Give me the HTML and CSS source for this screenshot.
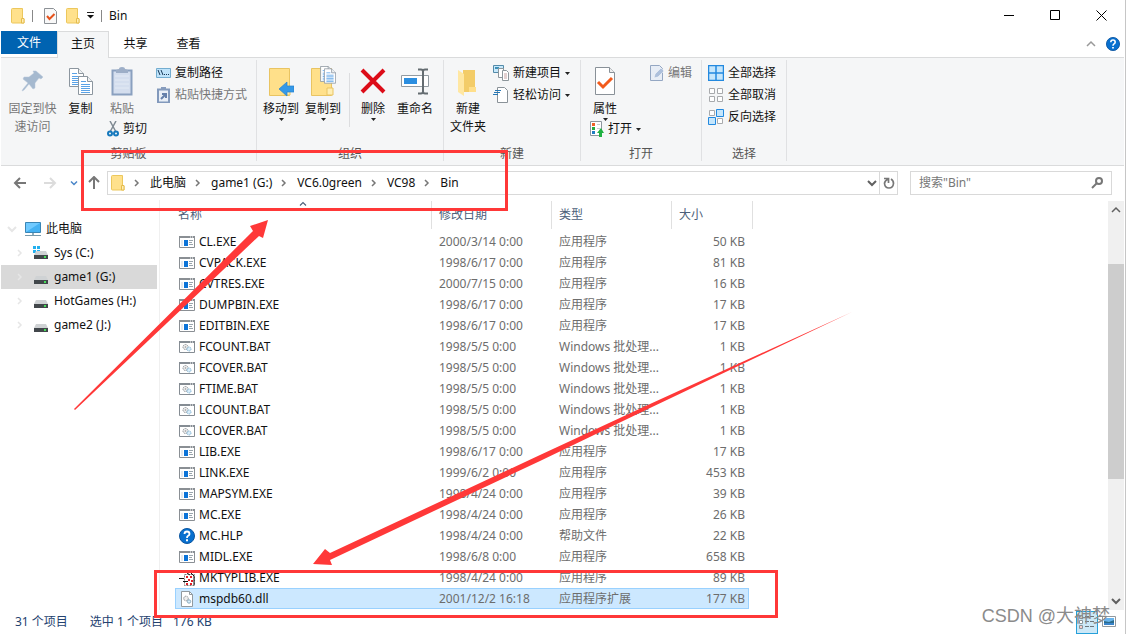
FILE: index.html
```html
<!DOCTYPE html>
<html lang="zh-CN">
<head>
<meta charset="utf-8">
<title>Bin</title>
<link rel="stylesheet" href="styles.css">
</head>
<body>
<svg class="defs" aria-hidden="true">
  <symbol id="folder" viewBox="0 0 14 16"><path d="M.5 1.500q0-1 1-1h10v10.500h1.500v4H1.500q-1 0-1-1z" fill="#ffe18c" stroke="#ecc75c"/><path d="M10.500 15v-4.500h2.500V15z" fill="#ffeeb5" stroke="#e5bc4c"/></symbol>
  <symbol id="chev-r" viewBox="0 0 6 8"><path d="M1 1l3 3-3 3" fill="none" stroke="currentColor" stroke-width="1.500"/></symbol>
  <symbol id="chev-d" viewBox="0 0 10 8"><path d="M1 2l4 4 4-4" fill="none" stroke="currentColor" stroke-width="2"/></symbol>
  <symbol id="chev-u" viewBox="0 0 10 8"><path d="M1 6l4-4 4 4" fill="none" stroke="currentColor" stroke-width="1.500"/></symbol>
  <symbol id="caret" viewBox="0 0 5 3"><path d="M0 0h5L2.500 3z" fill="currentColor"/></symbol>
  <symbol id="exe" viewBox="0 0 16 14"><path d="M.5 1.500h15v11H.5z" fill="#fff" stroke="#8a8f94"/><path d="M0 1h16v2H0z" fill="#8a8f94"/><path d="M11 2h1M13 2h1" stroke="#fff"/><path d="M2 5h2v6H2z" fill="#e4e9ee"/><path d="M5 5h4v6H5z" fill="#0a73d8"/><path d="M10 5.500h4M10 7.500h3M10 9.500h4" stroke="#9aa5ad"/></symbol>
  <symbol id="bat" viewBox="0 0 16 14"><path d="M.5 1.500h15v11H.5z" fill="#fff" stroke="#858c93"/><path d="M0 1h16v2H0z" fill="#858c93"/><path d="M11 2h1M13 2h1" stroke="#fff"/><circle cx="6.500" cy="7" r="2.500" fill="#eee" stroke="#8e9499" stroke-dasharray="1.500 .7"/><circle cx="6.500" cy="7" r=".8" fill="#999"/><circle cx="10" cy="9" r="2" fill="#d8edfa" stroke="#7fb2d2" stroke-dasharray="1.300 .6"/></symbol>
  <symbol id="drive" viewBox="0 0 14 8"><path d="M2 0h10l2 4H0z" fill="#cfd2d4"/><path d="M0 4h14v4H0z" fill="#42474b"/><path d="M10 5h2v2h-2z" fill="#45df57"/></symbol>
  <symbol id="help" viewBox="0 0 16 16"><circle cx="8" cy="8" r="7.500" fill="#0870cf" stroke="#0b55a0"/><path d="M5.500 6Q5.500 3.500 8 3.500T10.500 6Q10.500 7 9.200 7.800T8 10" fill="none" stroke="#fff" stroke-width="1.800"/><path d="M7 11.300h2v1.900H7z" fill="#fff"/></symbol>
  <symbol id="page" viewBox="0 0 15 19"><path d="M.5.5h9l5 5v13H.5z" fill="#fff" stroke="#8c969f"/><path d="M9.500.5v5h5" fill="#eef1f3" stroke="#8c969f"/><path d="M3 5.500h5M3 8.500h9M3 10.500h9M3 12.500h9M3 14.500h9M3 16.500h9" stroke="#5aa2e6"/></symbol>
</svg>

<div class="window">
  <header class="titlebar">
    <svg class="folder" aria-hidden="true"><use href="#folder"/></svg>
    <i class="bar"></i>
    <button class="quick check" aria-label="属性"><svg width="13" height="16"><path d="M.5.5h9l3 3v12H.5z" fill="#f8f8f8" stroke="#8c9196"/><path d="M3 8l2.500 3L10.500 6" fill="none" stroke="#e5511b" stroke-width="2"/></svg></button>
    <button class="quick" aria-label="新建文件夹"><svg class="folder"><use href="#folder"/></svg></button>
    <button class="quick more" aria-label="自定义快速访问工具栏"><svg width="7" height="7"><path d="M0 .5h7" stroke="#222"/><path d="M0 3h7L3.500 6.500z" fill="#111"/></svg></button>
    <i class="bar"></i>
    <h1>Bin</h1>
    <div class="controls">
      <button aria-label="最小化"><svg width="11" height="11"><path d="M0 5.500h10" stroke="#000"/></svg></button>
      <button aria-label="最大化"><svg width="11" height="11"><path d="M.5.5h9v9h-9z" fill="none" stroke="#000"/></svg></button>
      <button aria-label="关闭"><svg width="11" height="11"><path d="M.5.5l10 10m0-10l-10 10" stroke="#000"/></svg></button>
    </div>
  </header>

  <nav class="tabs">
    <button class="file">文件</button>
    <button class="active">主页</button>
    <button>共享</button>
    <button>查看</button>
    <div class="tab-tools">
      <button aria-label="最小化功能区"><svg class="chev gray"><use href="#chev-u"/></svg></button>
      <button aria-label="帮助"><svg width="14" height="14"><use href="#help"/></svg></button>
    </div>
  </nav>

  <section class="ribbon">
    <div class="group clipboard">
      <div class="tools">
        <button class="big pin dim"><svg width="32" height="36"><path d="M19 7l7 6-2 2-2-1-4 5v5l-2 1-4-5-5 6-2 1 1-2 5-6-5-4 1-2h5l5-4-1-2z" fill="#a5b9cf" stroke="#b6c6d8" stroke-width=".5"/></svg><span>固定到快<br>速访问</span></button>
        <button class="big copy"><svg width="26" height="36"><use href="#page" x="1" y="4" width="15" height="19"/><use href="#page" x="10" y="12" width="15" height="19"/></svg><span>复制</span></button>
        <div class="stack">
          <button class="big dim"><svg width="22" height="36"><path d="M1.500 6.500h19v24h-19z" fill="#d4deee" stroke="#8aa0bf" stroke-width="2"/><path d="M5 9V6l3-1q0-2 3-2t3 2l3 1v3z" fill="#9daec7"/><path d="M4 12h14M4 16h14M4 20h14M4 24h14" stroke="#e3eaf4"/></svg><span>粘贴</span></button>
          <button class="small cut"><svg width="12" height="16"><path d="M3 0l6 11M9 0L3 11" stroke="#7f8a93" stroke-width="1.500"/><circle cx="3" cy="12.500" r="2" fill="none" stroke="#1679bd" stroke-width="2"/><circle cx="9" cy="12.500" r="2" fill="none" stroke="#1679bd" stroke-width="2"/></svg>剪切</button>
        </div>
        <div class="smalls">
          <button class="small"><svg width="15" height="16"><path d="M.5 3.500h14v9H.5z" fill="#bfe3fa" stroke="#73add0"/><path d="M2 5l2 5M5 5l2 5M8 9.500h1M10 9.500h1M12 9.500h1" stroke="#173958"/></svg>复制路径</button>
          <button class="small dim"><svg width="15" height="16"><path d="M2 2.500h11v13H2z" fill="#e9eff7" stroke="#8299bc" stroke-width="2"/><path d="M5 0h5v3H5z" fill="#879cbd"/><path d="M5 12l5-5M6 7h4v4" fill="none" stroke="#6580aa" stroke-width="2"/></svg>粘贴快捷方式</button>
        </div>
      </div>
      <span class="caption">剪贴板</span>
    </div>

    <div class="group organize">
      <div class="tools">
        <button class="big"><svg width="26" height="36"><path d="M1.500 4.500h20v27h-20z" fill="#ffe08a" stroke="#e9c462"/><path d="M17 26h5v5h-5z" fill="#ffeeb3" stroke="#e9c462"/><path d="M11 25l8-7v4h7v6h-7v4z" fill="#3599e8" stroke="#2582cb" stroke-width=".7"/></svg><span>移动到</span><svg class="caret"><use href="#caret"/></svg></button>
        <button class="big"><svg width="26" height="36"><path d="M1.500 4.500h20v27h-20z" fill="#ffe08a" stroke="#e9c462"/><path d="M17 24h6v7h-6z" fill="#ffeeb3" stroke="#e9c462"/><use href="#page" x="10" y="2" width="13" height="16"/><use href="#page" x="14" y="4" width="12" height="16"/></svg><span>复制到</span><svg class="caret"><use href="#caret"/></svg></button>
        <i class="split"></i>
        <button class="big"><svg width="26" height="36"><path d="M2 6l22 22M24 6L2 28" stroke="#dc0c18" stroke-width="4"/></svg><span>删除</span><svg class="caret"><use href="#caret"/></svg></button>
        <button class="big"><svg width="28" height="36"><path d="M.5 11.500h27v11H.5z" fill="#fff" stroke="#929ba2"/><path d="M3 14h13v6H3z" fill="#2b8ee0"/><path d="M17 5.500h3q2 0 2 2v20q0 2-2 2h-3M27 5.500h-3q-2 0-2 2m0 20q0 2 2 2h3" fill="none" stroke="#646c71" stroke-width="2"/></svg><span>重命名</span></button>
      </div>
      <span class="caption">组织</span>
    </div>

    <div class="group create">
      <div class="tools">
        <button class="big"><svg width="22" height="36"><path d="M6 6h12v22H6z" fill="#f3cc68"/><path d="M1 6l6 4v22l-6-4z" fill="#ffe7a2"/><path d="M12 28v-5h7v5z" fill="#ffdf8b"/></svg><span>新建<br>文件夹</span></button>
        <div class="smalls">
          <button class="small"><svg width="16" height="16"><path d="M.5.5h10v7H.5z" fill="#c7e8fb" stroke="#538ba9"/><path d="M2 2h4v2H2z" fill="#3e90b7"/><path d="M5.500 3.500h5v9h-5z" fill="#fff" stroke="#8d969b"/><path d="M9.500 5.500h4l2 2v8h-6z" fill="#fff" stroke="#8d969b"/><path d="M11 9h3M11 11h3M11 13h3" stroke="#c5a1a1"/></svg>新建项目<svg class="caret"><use href="#caret"/></svg></button>
          <button class="small"><svg width="16" height="16"><path d="M4.500.5h7l3 3v12h-10z" fill="#fff" stroke="#8a9298"/><path d="M2 3.500h6M1 5.500h6M0 7.500h5" stroke="#2778b5"/></svg>轻松访问<svg class="caret"><use href="#caret"/></svg></button>
        </div>
      </div>
      <span class="caption">新建</span>
    </div>

    <div class="group open">
      <div class="tools">
        <div class="stack">
          <button class="big props"><svg width="22" height="36"><path d="M1.500 3.500h14l5 5v22h-19z" fill="#fff" stroke="#899198"/><path d="M15.500 3.500v5h5" fill="#eee" stroke="#899198"/><path d="M4 18l5 5L18 14" fill="none" stroke="#f25b1c" stroke-width="3"/></svg><span>属性</span><svg class="caret"><use href="#caret"/></svg></button>
          <button class="small"><svg width="14" height="16"><path d="M.5.5h11v14H.5z" fill="#fff" stroke="#8d969d"/><path d="M2 2h3v3H2z" fill="#ef6126"/><path d="M2 6h3v3H2z" fill="#27a940"/><path d="M2 10h3v3H2z" fill="#217dc3"/><path d="M7 3.500h3M7 7.500h3" stroke="#c8cdd0"/><path d="M7 12l4-5 3 5h-2v4H9v-4z" fill="#1fb141"/></svg>打开<svg class="caret"><use href="#caret"/></svg></button>
        </div>
        <div class="smalls">
          <button class="small dim"><svg width="14" height="16"><path d="M.5.5h9l3 3v12H.5z" fill="#e7edf6" stroke="#94a7c3"/><path d="M4 13l1-4 6-6 3 3-6 6z" fill="#adc0dc" stroke="#fff" stroke-width=".5"/></svg>编辑</button>
        </div>
      </div>
      <span class="caption">打开</span>
    </div>

    <div class="group select">
      <div class="tools">
        <div class="smalls">
          <button class="small"><svg width="16" height="16"><path d="M.5.5h15v15H.5zM8 0v16M0 8h16" fill="#c5e6fc" stroke="#2389df" stroke-width="1.500"/></svg>全部选择</button>
          <button class="small"><svg width="16" height="16"><path d="M1.500 1.500h5v5h-5zM9.500 1.500h5v5h-5zM1.500 9.500h5v5h-5zM9.500 9.500h5v5h-5z" fill="#fff" stroke="#a8aaad"/></svg>全部取消</button>
          <button class="small"><svg width="16" height="16"><path d="M1.500 1.500h5v5h-5zM9.500 9.500h5v5h-5z" fill="#fff" stroke="#a8aaad"/><path d="M8.500.5h7v7h-7zM.5 8.500h7v7h-7z" fill="#c5e6fc" stroke="#2389df"/></svg>反向选择</button>
        </div>
      </div>
      <span class="caption">选择</span>
    </div>
  </section>

  <section class="navbar">
    <div class="history">
      <button aria-label="后退"><svg width="14" height="12"><path d="M7 1L2 6l5 5M2 6h11" fill="none" stroke="#777" stroke-width="2"/></svg></button>
      <button aria-label="前进"><svg width="14" height="12"><path d="M7 1l5 5-5 5M12 6H1" fill="none" stroke="#dcdcdc" stroke-width="2"/></svg></button>
      <button aria-label="最近浏览的位置" class="recent"><svg width="8" height="6"><use href="#chev-d"/></svg></button>
      <button aria-label="上移" class="up"><svg width="12" height="14"><path d="M1 6l5-5 5 5M6 1v12" fill="none" stroke="#777" stroke-width="2"/></svg></button>
    </div>
    <div class="address">
      <svg class="folder" aria-hidden="true"><use href="#folder"/></svg>
      <ol class="crumbs">
        <li><svg><use href="#chev-r"/></svg><a href="#">此电脑</a></li>
        <li><svg><use href="#chev-r"/></svg><a href="#">game1 (G:)</a></li>
        <li><svg><use href="#chev-r"/></svg><a href="#">VC6.0green</a></li>
        <li><svg><use href="#chev-r"/></svg><a href="#">VC98</a></li>
        <li><svg><use href="#chev-r"/></svg><a href="#">Bin</a></li>
      </ol>
      <button aria-label="以前的位置" class="drop"><svg class="chev"><use href="#chev-d"/></svg></button>
      <button aria-label="刷新" class="refresh"><svg width="12" height="12"><path d="M8 2Q10.500 3.500 10.500 6.500Q10 11 6 11T1.500 6.500Q1.500 4 5 2M1 1.500h4.500V6" fill="none" stroke="#777" stroke-width="1.700"/></svg></button>
    </div>
    <label class="search"><input type="text" placeholder='搜索"Bin"' aria-label="搜索"><svg width="12" height="12"><circle cx="8" cy="4" r="3" fill="none" stroke="#777" stroke-width="2"/><path d="M6 6l-5 5" stroke="#777" stroke-width="2"/></svg></label>
  </section>

  <main class="content">
    <ul class="tree">
      <li class="root"><svg class="arrow"><use href="#chev-d"/></svg><svg width="16" height="16"><path d="M.5 1.500h15v10H.5z" fill="#45b2f3" stroke="#3985b5"/><path d="M1 11L15 2H1z" fill="#70caff"/><path d="M7 12h2v2H7z" fill="#8faebd"/><path d="M0 14.500h16" stroke="#7899aa"/></svg>此电脑</li>
      <li><svg class="arrow side"><use href="#chev-r"/></svg><svg width="16" height="14"><path d="M0 0h3v3H0zM4 0h3v3H4zM0 4h3v3H0zM4 4h3v3H4z" fill="#22b0ef"/><use href="#drive" x="1" y="5" width="14" height="8"/></svg>Sys (C:)</li>
      <li class="current"><svg class="arrow side"><use href="#chev-r"/></svg><svg width="16" height="14"><use href="#drive" x="1" y="6" width="14" height="8"/></svg>game1 (G:)</li>
      <li><svg class="arrow side"><use href="#chev-r"/></svg><svg width="16" height="14"><use href="#drive" x="1" y="6" width="14" height="8"/></svg>HotGames (H:)</li>
      <li><svg class="arrow side"><use href="#chev-r"/></svg><svg width="16" height="14"><use href="#drive" x="1" y="6" width="14" height="8"/></svg>game2 (J:)</li>
    </ul>
    <div class="files">
      <table>
        <thead><tr><th><svg class="sort"><use href="#chev-u"/></svg>名称</th><th>修改日期</th><th>类型</th><th>大小</th></tr></thead>
        <tbody>
          <tr><td><svg><use href="#exe"/></svg>CL.EXE</td><td>2000/3/14 0:00</td><td>应用程序</td><td>50 KB</td></tr>
          <tr><td><svg><use href="#exe"/></svg>CVPACK.EXE</td><td>1998/6/17 0:00</td><td>应用程序</td><td>81 KB</td></tr>
          <tr><td><svg><use href="#exe"/></svg>CVTRES.EXE</td><td>2000/7/15 0:00</td><td>应用程序</td><td>16 KB</td></tr>
          <tr><td><svg><use href="#exe"/></svg>DUMPBIN.EXE</td><td>1998/6/17 0:00</td><td>应用程序</td><td>17 KB</td></tr>
          <tr><td><svg><use href="#exe"/></svg>EDITBIN.EXE</td><td>1998/6/17 0:00</td><td>应用程序</td><td>17 KB</td></tr>
          <tr><td><svg><use href="#bat"/></svg>FCOUNT.BAT</td><td>1998/5/5 0:00</td><td>Windows 批处理...</td><td>1 KB</td></tr>
          <tr><td><svg><use href="#bat"/></svg>FCOVER.BAT</td><td>1998/5/5 0:00</td><td>Windows 批处理...</td><td>1 KB</td></tr>
          <tr><td><svg><use href="#bat"/></svg>FTIME.BAT</td><td>1998/5/5 0:00</td><td>Windows 批处理...</td><td>1 KB</td></tr>
          <tr><td><svg><use href="#bat"/></svg>LCOUNT.BAT</td><td>1998/5/5 0:00</td><td>Windows 批处理...</td><td>1 KB</td></tr>
          <tr><td><svg><use href="#bat"/></svg>LCOVER.BAT</td><td>1998/5/5 0:00</td><td>Windows 批处理...</td><td>1 KB</td></tr>
          <tr><td><svg><use href="#exe"/></svg>LIB.EXE</td><td>1998/6/17 0:00</td><td>应用程序</td><td>17 KB</td></tr>
          <tr><td><svg><use href="#exe"/></svg>LINK.EXE</td><td>1999/6/2 0:00</td><td>应用程序</td><td>453 KB</td></tr>
          <tr><td><svg><use href="#exe"/></svg>MAPSYM.EXE</td><td>1998/4/24 0:00</td><td>应用程序</td><td>39 KB</td></tr>
          <tr><td><svg><use href="#exe"/></svg>MC.EXE</td><td>1998/4/24 0:00</td><td>应用程序</td><td>26 KB</td></tr>
          <tr><td><svg class="tall"><use href="#help"/></svg>MC.HLP</td><td>1998/4/24 0:00</td><td>帮助文件</td><td>22 KB</td></tr>
          <tr><td><svg><use href="#exe"/></svg>MIDL.EXE</td><td>1998/6/8 0:00</td><td>应用程序</td><td>658 KB</td></tr>
          <tr><td><svg class="tall" viewBox="0 0 16 16"><path d="M5.500 4.500h10v11h-10z" fill="#fff" stroke="#777" stroke-dasharray="2 1"/><path d="M8 0v3l3 2M0 8.500h5M4 11.500h5M12 3l3 3v9" fill="none" stroke="#111"/><path d="M7 6h2v2H7zM11 6h2v2h-2zM9 9h2v2H9zM12 10h2v2h-2zM7 13h2v2H7zM11 13h2v2h-2z" fill="#e02028"/></svg>MKTYPLIB.EXE</td><td>1998/4/24 0:00</td><td>应用程序</td><td>89 KB</td></tr>
          <tr class="selected"><td><svg class="tall" viewBox="0 0 16 16"><path d="M2.500.5h8l3 3v12h-11z" fill="#fff" stroke="#929a9f"/><path d="M10.500.5v3h3" fill="none" stroke="#929a9f"/><circle cx="7" cy="7.500" r="2.300" fill="#eee" stroke="#8e9499" stroke-dasharray="1.500 .6"/><circle cx="10" cy="10.500" r="1.700" fill="#d8edfa" stroke="#8badc0"/></svg>mspdb60.dll</td><td>2001/12/2 16:18</td><td>应用程序扩展</td><td>177 KB</td></tr>
        </tbody>
      </table>
    </div>
    <div class="scrollbar">
      <button aria-label="向上滚动"><svg class="chev"><use href="#chev-u"/></svg></button>
      <div class="track"><i class="thumb"></i></div>
      <button aria-label="向下滚动"><svg class="chev"><use href="#chev-d"/></svg></button>
    </div>
  </main>

  <footer class="status">
    <span>31 个项目</span><span>选中 1 个项目</span><span>176 KB</span>
    <div class="views">
      <button class="details" aria-label="详细信息"><svg width="16" height="16"><path d="M.5 1.500h3v3h-3zM.5 6.500h3v3h-3zM.5 11.500h3v3h-3z" fill="#fff" stroke="#8b9499"/><path d="M1.500 13h1" stroke="#d33"/><path d="M6 2.500h4M11 2.500h4M6 7.500h4M11 7.500h4M6 12.500h4M11 12.500h4" stroke="#6d767b"/></svg></button>
      <button aria-label="大图标"><svg width="14" height="12"><path d="M.5.5h13v10H.5z" fill="#fff" stroke="#92999e"/><path d="M2 2h10v7H2z" fill="#69b5ed"/><path d="M2 5l5 1 5-2v5H2z" fill="#2b6c8b"/><path d="M2 7h10v2H2z" fill="#3984ca"/></svg></button>
    </div>
  </footer>
  <span class="watermark">CSDN @大神梦</span>
  <svg class="marks" aria-hidden="true">
    <g fill="none" stroke="#ff3838" stroke-width="3"><path d="M82.500 151.500h424v58h-424z"/><path d="M155.500 571.500h621v45h-621z"/></g>
    <g fill="#ff3838"><path d="M74 409L253 231l-3-5 18-6-5 18-4-2L75 410z"/><path d="M852 312L650 404L540 455L330 553l-5-4-12 15 19 1-2-5L540 461L650 408z"/></g>
  </svg>
</div>
</body>
</html>
```
FILE: styles.css
```css
* { box-sizing: border-box; }
html, body { height: 100%; }
body { margin: 0; background: #fff; color: #111; font: 12px/18px "Noto Sans", "Noto Sans CJK SC", sans-serif; overflow: hidden; }
button { display: flex; align-items: center; justify-content: center; margin: 0; padding: 0; border: 0; background: none; color: inherit; font: inherit; white-space: nowrap; }
svg { display: block; flex: none; }
.defs { position: absolute; width: 0; height: 0; }
.window { position: relative; display: flex; flex-direction: column; min-height: 100%; padding: 0 1px; border-right: 1px solid #c6c6c6; }
.folder { width: 14px; height: 16px; }
.chev { width: 10px; height: 8px; color: #606060; }
.gray { color: #999; }
.caret { width: 5px; height: 3px; color: #222; }

.titlebar { display: flex; align-items: center; height: 31px; padding-left: 10px; }
.titlebar .bar { width: 1px; height: 12px; margin: 0 7px; background: #888; }
.titlebar .check { margin: 0 9px 0 4px; }
.titlebar .more { margin-left: 7px; }
.titlebar h1 { margin: 0; font-size: 12px; font-weight: 400; }
.controls { display: flex; margin-left: auto; }
.controls button { width: 46px; height: 31px; }

.tabs { display: flex; height: 27px; border-bottom: 1px solid #dadbdc; }
.tabs > button { width: 53px; height: 25px; }
.tabs > .file { width: 56px; height: 23px; background: #0063b1; color: #fff; }
.tabs > .active { width: 52px; height: 27px; padding-bottom: 2px; border: solid #dadbdc; border-width: 1px 1px 0; background: #f5f6f7; }
.tab-tools { display: flex; align-items: center; gap: 10px; margin-left: auto; padding-right: 4px; }

.ribbon { display: flex; height: 108px; padding: 2px 0 4px; border-bottom: 1px solid #dadbdc; background: #f5f6f7; }
.group { display: flex; flex-direction: column; flex: none; border-right: 1px solid #e0e1e3; }
.tools { display: flex; flex: 1; }
.caption { height: 18px; text-align: center; line-height: 22px; color: #555; }
.clipboard { width: 256px; }
.organize { width: 187px; }
.create { width: 137px; }
.open { width: 121px; }
.select { width: 85px; }
.big { flex-direction: column; justify-content: flex-start; width: 42px; padding-top: 4px; line-height: 18px; }
.pin { width: 63px; }
.copy { width: 33px; }
.dim { color: #777; }
.organize .tools { padding-left: 3px; }
.organize .split { width: 1px; height: 54px; margin: 13px 2px 0 5px; background: #dcdddf; }
.stack { display: flex; flex-direction: column; width: 53px; padding-left: 2px; }
.stack .big { width: 46px; height: 58px; }
.stack .cut { padding-left: 8px; }
.small { justify-content: flex-start; gap: 4px; height: 22px; }
.smalls { padding: 2px 0 0 6px; }
.create .big { width: 48px; }
.create .smalls { padding-left: 1px; }
.open .stack { width: 61px; padding-left: 9px; }
.open .props { width: 30px; }
.open .smalls { padding-left: 8px; }

.navbar { display: flex; align-items: center; height: 34px; padding-right: 12px; }
.history { display: flex; align-items: center; gap: 16px; width: 106px; padding-left: 12px; }
.history .recent { margin-right: -6px; margin-left: -3px; color: #4a86c8; }
.address { display: flex; align-items: center; flex: 1; height: 24px; padding-left: 3px; border: 1px solid #d9d9d9; }
.crumbs { display: flex; flex: 1; margin: 0; padding: 0; list-style: none; }
.crumbs li { display: flex; align-items: center; gap: 10px; padding-left: 9px; line-height: 16px; }
.crumbs svg { width: 6px; height: 8px; color: #777; }
.crumbs a { color: #111; text-decoration: none; }
.drop { width: 12px; }
.refresh { width: 18px; height: 22px; margin-left: 1px; border-left: 1px solid #d9d9d9; }
.search { display: flex; align-items: center; width: 202px; height: 24px; margin-left: 12px; padding: 0 8px; border: 1px solid #d9d9d9; }
.search input { flex: 1; min-width: 0; padding: 0; border: 0; outline: 0; font: inherit; }
.search input::placeholder { color: #777; opacity: 1; }

.content { display: flex; flex: 1; }
.tree { width: 159px; margin: 0; padding: 17px 2px 0 0; border-right: 1px solid #f0f0f0; list-style: none; }
.tree li { display: flex; align-items: center; gap: 5px; height: 24px; padding-left: 14px; }
.tree .root { padding-left: 6px; }
.tree .current { background: #d9d9d9; }
.tree .arrow { width: 10px; height: 8px; margin-right: 3px; color: #e6e6e6; }
.tree .side { margin-right: 3px; }
.files { flex: 1; padding: 1px 0 0 15px; }
table, thead, tbody { display: block; }
tr { display: grid; grid-template-columns: 257px 120px 120px 1fr; width: 574px; height: 21px; border: 1px solid transparent; }
th, td { display: flex; align-items: center; padding: 0 0 0 6px; font-weight: 400; color: #6d6d6d; }
td:first-child { gap: 4px; padding-left: 3px; color: #111; }
td:last-child { justify-content: flex-end; padding-right: 3px; }
td svg { width: 16px; height: 14px; }
td .tall { height: 16px; }
thead tr { width: 578px; height: 30px; padding-bottom: 2px; border: 0; }
th { position: relative; padding-left: 7px; border-right: 1px solid #e0e0e0; color: #4c607a; }
th:first-child { padding-left: 3px; }
.sort { position: absolute; top: 0; left: 50%; width: 8px; height: 6px; margin-left: -4px; }
.selected { border-color: #99d1ff; background: #cce8ff; }
.scrollbar { display: flex; flex-direction: column; width: 16px; margin-top: 1px; background: #f0f0f0; }
.scrollbar button { height: 18px; }
.track { flex: 1; padding-top: 45px; }
.thumb { display: block; height: 215px; background: #cdcdcd; }

.status { display: flex; align-items: center; height: 24px; padding-left: 14px; color: #24426f; }
.status span:nth-child(2) { margin: 0 10px 0 22px; }
.views { display: flex; gap: 4px; margin-left: auto; padding-right: 8px; }
.views .details { width: 22px; height: 23px; border: 1px solid #26a0da; background: #cce8f7; }
.watermark { position: absolute; right: 15px; bottom: 4px; font: 18px/28px "Liberation Sans", "Noto Sans CJK SC", sans-serif; color: #8b8b8b; }
.marks { position: absolute; top: 0; left: 0; width: 100%; height: 100%; pointer-events: none; }
```
